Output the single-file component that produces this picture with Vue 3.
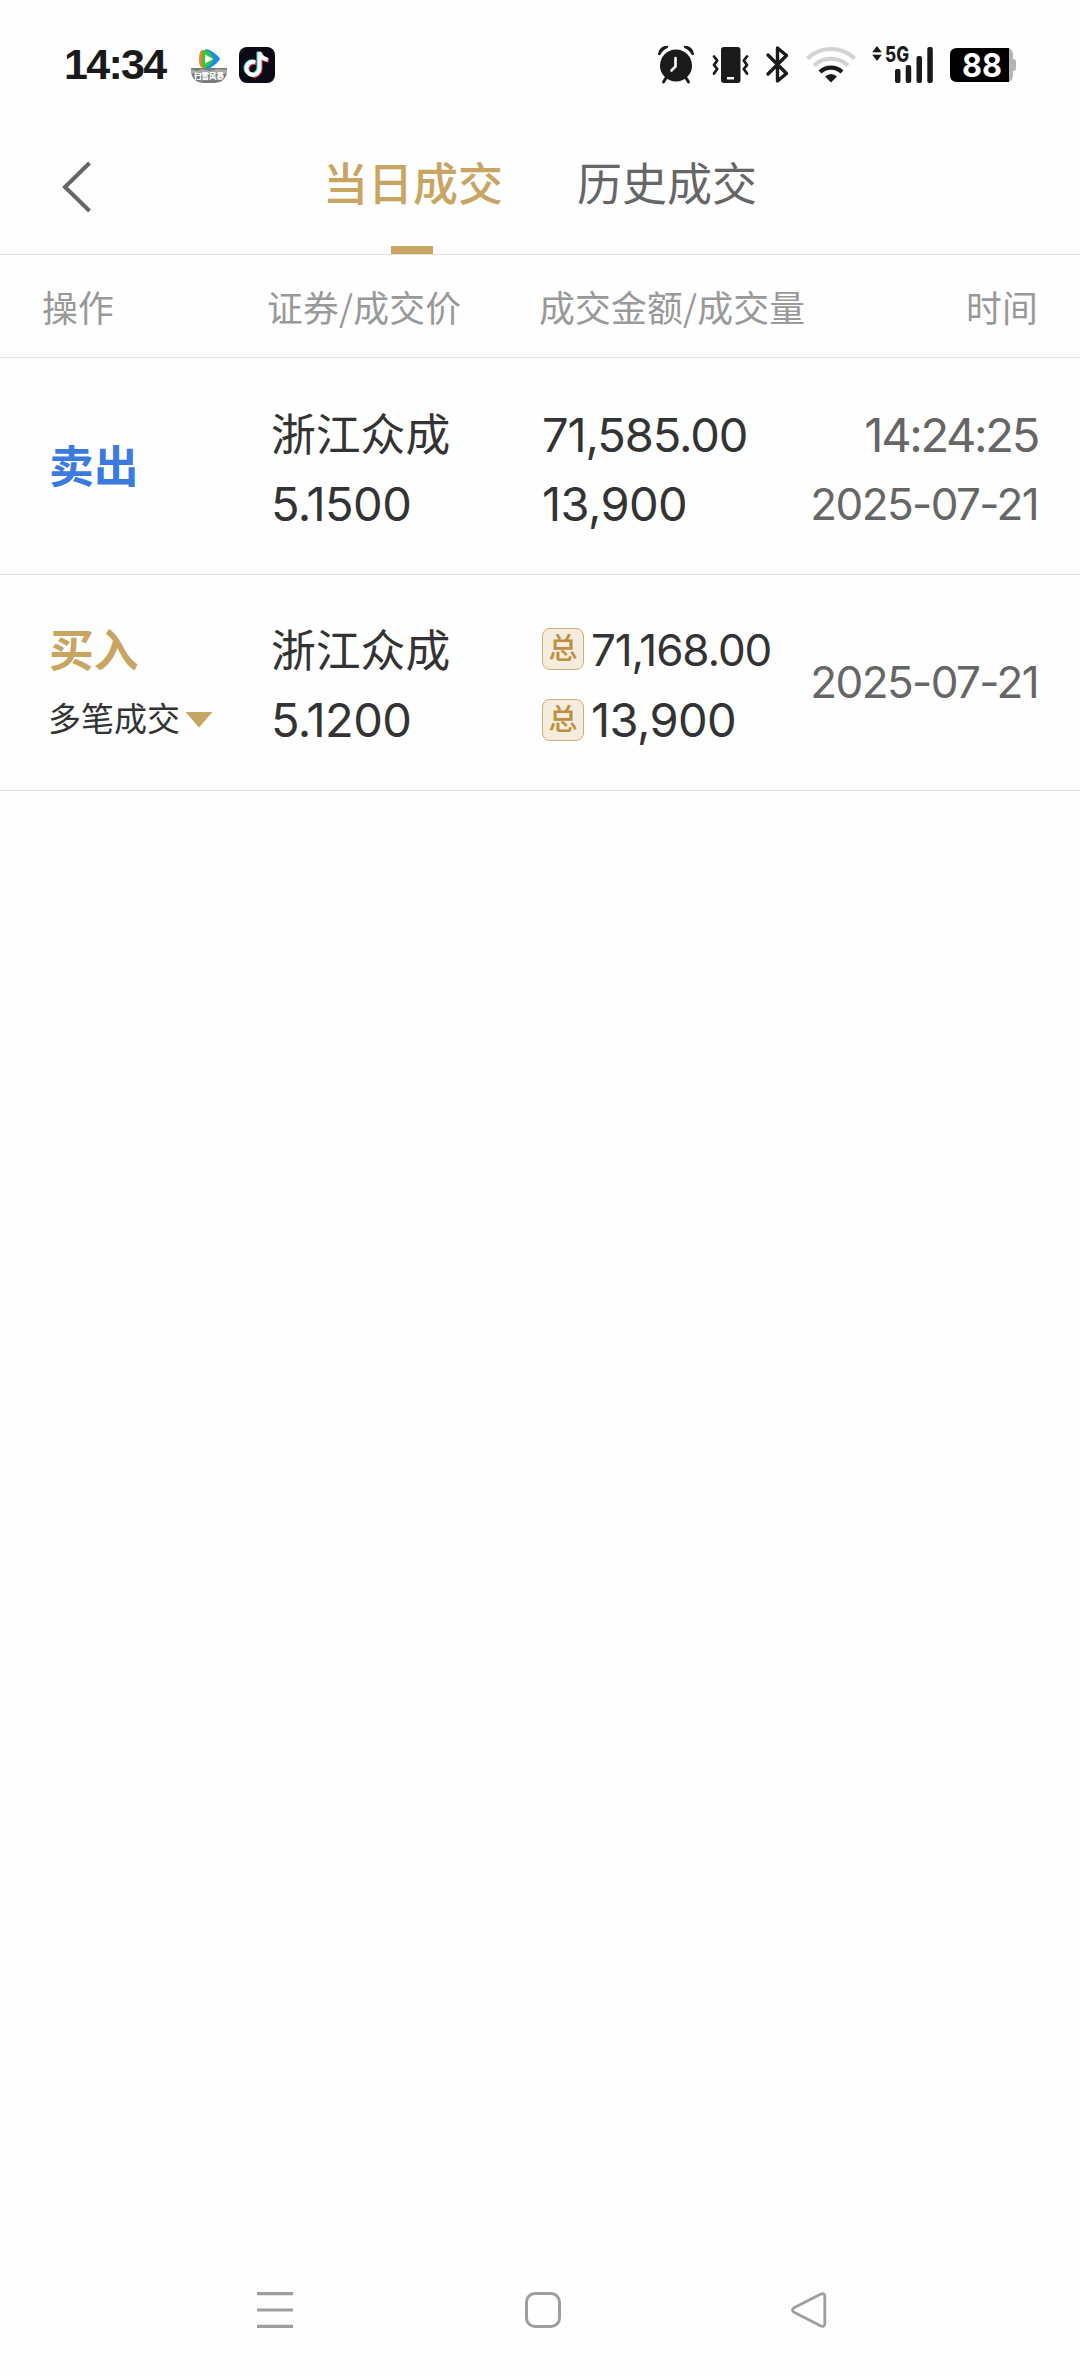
<script setup>
const headers = ['操作', '证券/成交价', '成交金额/成交量', '时间']
const trades = [
  {
    side: 'sell', label: '卖出', name: '浙江众成', price: '5.1500',
    amount: '71,585.00', volume: '13,900', time: '14:24:25', date: '2025-07-21', multi: false,
  },
  {
    side: 'buy', label: '买入', name: '浙江众成', price: '5.1200',
    amount: '71,168.00', volume: '13,900', time: '', date: '2025-07-21', multi: true,
  },
]
</script>

<template>
  <div class="screen">
    <div class="status">
      <span class="clock">14:34</span>
      <svg class="app-video" width="36" height="36" viewBox="0 0 36 36">
        <path d="M0 21h36v4q-1 10-12 11H12Q1 35 0 25z" fill="#777c75" />
        <path d="M0 22l6 2 5-2 8 2 7-2 10 1v3l-6 2-9-2-9 3-9-3-3 1z" fill="#a9aca5" />
        <path d="M12 3Q8 3 8 12t4 9z" fill="#f58220" />
        <path d="M14 2.500q3-.8 6 1.300 8 5.200 9 8-1 3.500-9 8.700-5 2.500-7 0-1.500-9 1-18z" fill="#1b8fe8" />
        <path d="M12 3q6 0 11 9-5 9-11 9-2.500-9 0-18z" fill="#37c837" />
        <path d="M14 7.500l8 4.500-8 4.500z" fill="#fff" />
        <text x="18" y="32" text-anchor="middle" class="app-caption">扫雷风暴</text>
      </svg>
      <svg class="app-note" width="36" height="36" viewBox="0 0 36 36">
        <rect width="36" height="36" rx="8" fill="#0b0a16" />
        <g fill="none" stroke-width="4">
          <path d="M16.500 15.500a6.500 6.500 0 1 0 4.200 6.500V5.500q1 6 8.300 7.500" stroke="#25e5e0" transform="translate(-1.200 -.8)" />
          <path d="M16.500 15.500a6.500 6.500 0 1 0 4.200 6.500V5.500q1 6 8.300 7.500" stroke="#f5345b" transform="translate(.8 .6)" />
          <path d="M16.500 15.500a6.500 6.500 0 1 0 4.200 6.500V5.500q1 6 8.300 7.500" stroke="#fff" transform="translate(-.2 -.2)" />
        </g>
      </svg>
      <div class="status-right">
        <svg class="alarm" width="38" height="39" viewBox="0 0 38 39">
          <path d="M1 9.500Q2 1 10.500 .8q1.500 1 0 2.200-5 2-7 6.500-1.500 1.200-2.500 0zM37 9.500Q36 1 27.500 .8q-1.500 1 0 2.200 5 2 7 6.500 1.500 1.200 2.500 0z" fill="#1a1a1a" />
          <path d="M9 33l-2.500 4M29 33l2.500 4" stroke="#1a1a1a" stroke-width="3" stroke-linecap="round" />
          <circle cx="19" cy="20.500" r="16" fill="#1a1a1a" />
          <path d="M18.500 13v8.500l-4 4" fill="none" stroke="#fff" stroke-width="2.600" stroke-linecap="round" />
        </svg>
        <svg class="vibrate" width="37" height="36" viewBox="0 0 37 36">
          <rect x="9" width="19.500" height="36" rx="3" fill="#1a1a1a" />
          <rect x="15" y="30" width="7" height="2.500" fill="#fff" />
          <path d="M2 9.500l3.200 4-3.200 4.500 3.200 4-3.200 4.500M35 9.500l-3.200 4 3.200 4.500-3.200 4 3.200 4.500" fill="none" stroke="#1a1a1a" stroke-width="2.800" stroke-linecap="round" stroke-linejoin="round" />
        </svg>
        <svg class="bluetooth" width="23" height="37" viewBox="0 0 23 37">
          <path d="M2 9l18.500 18.500-9 7.500V2l9 7.500L2 28" fill="none" stroke="#1a1a1a" stroke-width="3.400" stroke-linecap="round" stroke-linejoin="round" />
        </svg>
        <svg class="wifi" width="50" height="36" viewBox="0 0 50 36">
          <g fill="none" stroke-width="4">
            <path d="M1.500 11.500a34 34 0 0 1 47 0" stroke="#d2d2d2" />
            <path d="M8 18.500a24.500 24.500 0 0 1 34 0" stroke="#d2d2d2" />
            <path d="M14 25a16 16 0 0 1 22 0" stroke="#1a1a1a" stroke-width="4.200" />
          </g>
          <path d="M19 29.500q6-5 12 0L25 35.500z" fill="#1a1a1a" />
        </svg>
        <svg class="signal" width="62" height="38" viewBox="0 0 62 38">
          <path d="M5 0l4.800 6.200H.2zM5 15L.2 8.800h9.600z" fill="#1a1a1a" />
          <text x="13" y="15.500" class="net" textLength="24" lengthAdjust="spacingAndGlyphs">5G</text>
          <g fill="#1a1a1a">
            <rect x="23" y="23" width="5.500" height="14" rx="2" />
            <rect x="33.700" y="19" width="5.500" height="18" rx="2" />
            <rect x="44.500" y="10" width="5.500" height="27" rx="2" />
            <rect x="55.300" y="1" width="5.500" height="36" rx="2" />
          </g>
        </svg>
        <svg class="battery" width="66" height="34" viewBox="0 0 66 34">
          <path d="M58 0q5 1 5 7v4q3 0 3 3v6q0 3-3 3v4q0 6-5 7z" fill="#b4b4b4" />
          <path d="M7 0h52v34H7q-7 0-7-7V7q0-7 7-7z" fill="#000" />
          <text x="32" y="29" text-anchor="middle" class="level" textLength="40" lengthAdjust="spacingAndGlyphs">88</text>
        </svg>
      </div>
    </div>

    <header class="nav">
      <svg class="back" width="30" height="52" viewBox="0 0 30 52">
        <path d="M27.500 2L3 26l24.500 24" fill="none" stroke="#666" stroke-width="4" />
      </svg>
      <div class="tab active">当日成交</div>
      <div class="tab">历史成交</div>
    </header>

    <div class="head">
      <span v-for="h in headers" :key="h">{{ h }}</span>
    </div>

    <div v-for="t in trades" :key="t.side" class="row" :class="t.side">
      <div class="op">
        <div class="side">{{ t.label }}</div>
        <div v-if="t.multi" class="multi">
          多笔成交
          <svg width="28" height="16" viewBox="0 0 28 16"><path d="M.5 0h27L14 15.500z" fill="#c9a562" /></svg>
        </div>
      </div>
      <div class="stock">
        <div class="name">{{ t.name }}</div>
        <div class="num price">{{ t.price }}</div>
      </div>
      <div class="deal">
        <div class="num amount"><i v-if="t.multi" class="badge">总</i><span>{{ t.amount }}</span></div>
        <div class="num volume"><i v-if="t.multi" class="badge">总</i><span>{{ t.volume }}</span></div>
      </div>
      <div class="when">
        <div v-if="t.time" class="num time">{{ t.time }}</div>
        <div class="num date">{{ t.date }}</div>
      </div>
    </div>

    <footer class="keys">
      <svg width="36" height="36" viewBox="0 0 36 36">
        <path d="M0 1.700h36M0 18h36M0 34.300h36" stroke="#9e9e9e" stroke-width="3.200" />
      </svg>
      <svg width="36" height="36" viewBox="0 0 36 36">
        <rect x="1.500" y="1.500" width="33" height="33" rx="8.500" fill="none" stroke="#9e9e9e" stroke-width="3" />
      </svg>
      <svg width="36" height="36" viewBox="0 0 36 36">
        <path d="M29.500 2.300Q33.500 .5 33.800 4v28q-.3 3.500-4.300 1.700L3 20.200q-3-2.200 0-4.400z" fill="none" stroke="#9e9e9e" stroke-width="2.800" stroke-linejoin="round" />
      </svg>
    </footer>
  </div>
</template>

<style>
body { background: #fefefe; }
</style>

<style scoped>
.screen {
  width: 1080px;
  height: 2376px;
  display: flex;
  flex-direction: column;
  background: #fefefe;
  color: #333;
  font-family: Inter, "Noto Sans CJK SC", sans-serif;
  overflow: hidden;
}
.screen svg { display: block; flex: none; overflow: visible; }
.status {
  height: 128px;
  flex: none;
  display: flex;
  align-items: center;
  padding: 1px 64px 0 64px;
  box-sizing: border-box;
}
.clock {
  width: 127px;
  font-family: "Liberation Sans", Arial, sans-serif;
  font-size: 43px;
  font-weight: 700;
  line-height: 50px;
  margin-top: -2px;
  color: #1a1a1a;
  white-space: nowrap;
  letter-spacing: -1.7px;
}
.app-caption { font: 900 7.500px "Noto Sans CJK SC", sans-serif; fill: #fff; }
.app-note { margin-left: 12px; }
.status-right { margin-left: auto; display: flex; align-items: center; }
.vibrate { margin-left: 17px; }
.bluetooth { margin-left: 17px; }
.wifi { margin-left: 17px; }
.signal { margin-left: 16px; }
.battery { margin-left: 16px; }
.net { font: 800 21px Inter, sans-serif; fill: #1a1a1a; }
.level { font: 700 32px Inter, sans-serif; fill: #fff; }

.nav {
  height: 126px;
  flex: none;
  display: flex;
  border-bottom: 1px solid #e2e2e2;
}
.back { margin: 33px 0 0 62px; }
.tab {
  height: 126px;
  width: 178px;
  margin-left: 76px;
  font-size: 45px;
  line-height: 114px;
  color: #666;
  white-space: nowrap;
}
.tab.active {
  margin-left: 231px;
  display: flex;
  flex-direction: column;
  color: #c9a562;
  font-weight: 500;
}
.tab.active::after {
  content: "";
  width: 42px;
  height: 8px;
  margin: 4px 0 0 68px;
  background: #c9a562;
}
.head {
  height: 102px;
  flex: none;
  display: grid;
  grid-template-columns: 225px 272px 1fr auto;
  padding: 0 42px;
  border-bottom: 1px solid #e2e2e2;
  font-family: "Noto Sans CJK SC", sans-serif;
  font-size: 35.800px;
  letter-spacing: 0.2px;
  line-height: 102px;
  color: #999;
}
.row {
  height: 216px;
  flex: none;
  box-sizing: border-box;
  display: grid;
  grid-template-columns: 222px 271px 1fr auto;
  padding: 42px 42px 0 49px;
  border-bottom: 1px solid #e2e2e2;
}
.row.sell { height: 217px; padding-top: 43px; }
.num {
  height: 69px;
  line-height: 67px;
  font-size: 47px;
  font-weight: 400;
  letter-spacing: -0.6px;
  white-space: nowrap;
}
.name { height: 69px; line-height: 69px; font-size: 44.800px; }
.side { height: 69px; line-height: 69px; font-size: 44.800px; font-weight: 700; }
.sell .side { margin-top: 32px; color: #3b7be0; }
.buy .side { color: #c9a562; }
.multi {
  height: 67px;
  line-height: 65px;
  font-size: 33px;
  display: flex;
  align-items: center;
  gap: 5px;
  margin-left: -1px;
}
.deal .num { display: flex; align-items: center; height: 67px; margin-bottom: 2px; }
.badge {
  width: 42px;
  height: 42px;
  box-sizing: border-box;
  border: 1px solid #cdae78;
  border-radius: 8px;
  background: #f6ecdd;
  color: #bd8f3f;
  font-size: 29px;
  font-style: normal;
  font-weight: 500;
  line-height: 40px;
  text-align: center;
  letter-spacing: 0;
  margin: -4px 7px 0 0;
}
.volume .badge { margin-top: 0; }
.num.amount { letter-spacing: -1.1px; }
.buy .amount span { font-size: 44px; }
.when { color: #666; text-align: right; }
.num.time { letter-spacing: -2.3px; }
.num.date { font-size: 44px; line-height: 69px; letter-spacing: -1.6px; }
.buy .date { margin-top: 31px; }

.keys {
  margin-top: auto;
  height: 84px;
  flex: none;
  display: grid;
  grid-template-columns: 268px 266px 1fr;
  padding: 0 0 0 257px;
}
</style>
